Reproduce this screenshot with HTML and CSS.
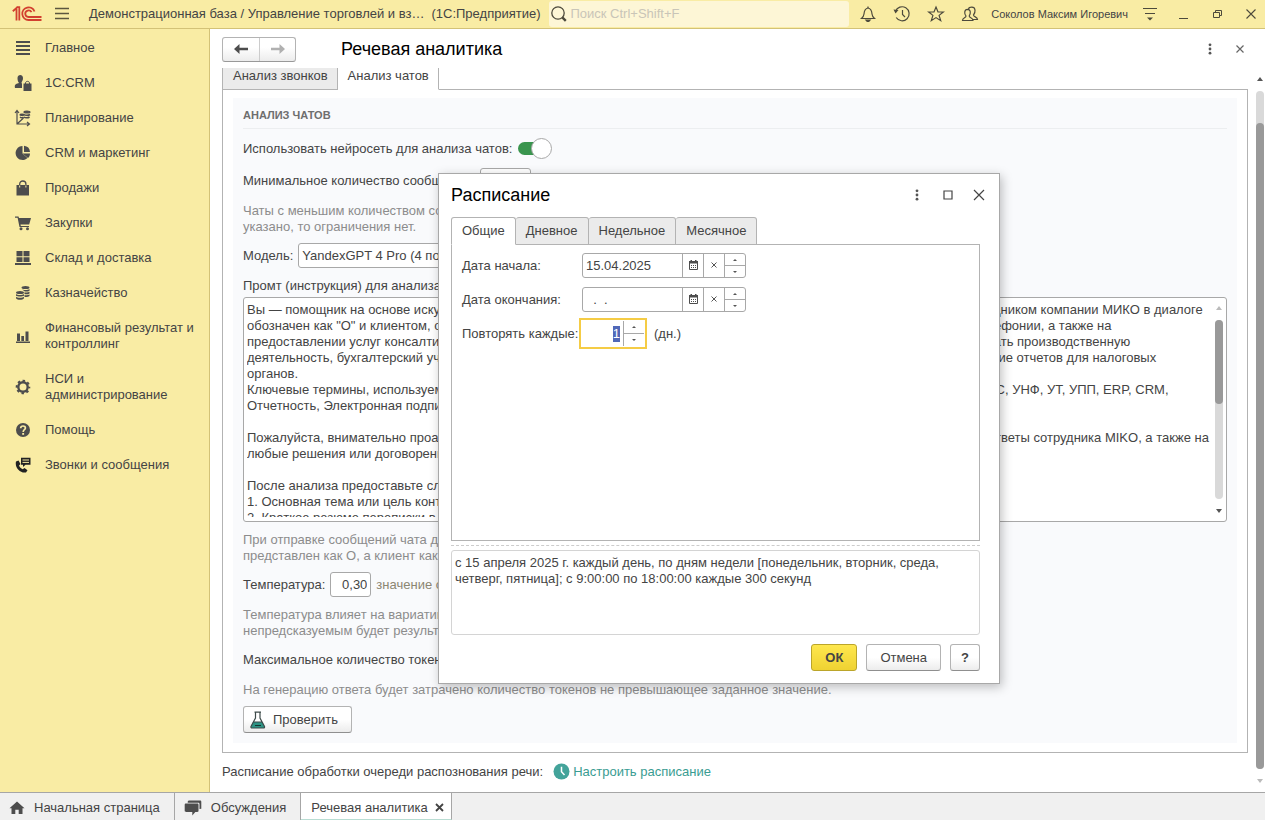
FILE: index.html
```html
<!DOCTYPE html>
<html lang="ru">
<head>
<meta charset="utf-8">
<meta name="viewport" content="width=device-width, initial-scale=1">
<title>Речевая аналитика</title>
<link rel="stylesheet" href="styles.css">
</head>
<body>
<div class="app">
  <header class="topbar">
    <svg class="logo" width="30" height="16" viewBox="0 0 30 16" fill="none" stroke="#d2402f" stroke-width="1.800"><path d="M.8 5.200L4.500 2V14.500M7.300 14.500V1.200H4.500"/><path d="M22.500 5.500A6.300 6.300 0 1 0 16.500 14H29.500M19.500 6.200A3.300 3.300 0 1 0 16.500 11H29.500"/></svg>
    <button class="icon-btn menu-btn" aria-label="Меню"><svg width="16" height="14" viewBox="0 0 16 14" stroke="#5c563f" stroke-width="1.300"><path d="M1 1.500h14M1 6.500h14M1 11.500h14"/></svg></button>
    <div class="app-title"><span>Демонстрационная база / Управление торговлей и вз…</span><span>(1С:Предприятие)</span></div>
    <label class="search">
      <svg width="18" height="18" viewBox="0 0 18 18" fill="none" stroke="#4d4a3c" stroke-width="1.300"><circle cx="8" cy="8" r="6.200"/><path d="M12.300 12.300l3.500 3.500" stroke-width="2.400"/></svg>
      <input type="text" placeholder="Поиск Ctrl+Shift+F" aria-label="Поиск">
    </label>
    <nav class="top-tools">
      <button class="icon-btn" aria-label="Оповещения"><svg width="18" height="18" viewBox="0 0 18 18" fill="none" stroke="#4d4a3c" stroke-width="1.200"><path d="M2.500 13.500h13c-1.800-1.600-2.300-2.500-2.500-4.500-.2-3-1-5.500-4-6-3 .5-3.800 3-4 6-.2 2-.7 2.900-2.500 4.500z"/><path d="M9 3V1.500"/><path d="M7 15.200h4L9.800 16.500H8.200z" fill="#4d4a3c"/></svg></button>
      <button class="icon-btn" aria-label="История"><svg width="18" height="18" viewBox="0 0 18 18" fill="none" stroke="#4d4a3c" stroke-width="1.200"><path d="M2.500 6.500A7 7 0 1 1 3.200 12.500M9.500 5v4.500l2.500 2.500"/><path d="M.5 4.500l5 .5-3 3.500z" fill="#4d4a3c" stroke="none"/></svg></button>
      <button class="icon-btn" aria-label="Избранное"><svg width="18" height="18" viewBox="0 0 18 18" fill="none" stroke="#4d4a3c" stroke-width="1.200"><path d="M9 2l2 5h5.300l-4.200 3.400 1.600 5.300L9 12.600l-4.700 3.100 1.600-5.300L1.700 7H7z"/></svg></button>
      <button class="icon-btn" aria-label="Пользователь"><svg width="18" height="18" viewBox="0 0 18 18" fill="none" stroke="#4d4a3c" stroke-width="1.200"><path d="M1.500 15.500c0-3 3.500-2.500 3.500-4.500C3 8.500 3.200 4.500 6.500 4.300c3.500.2 3.300 4.200 1.700 6.700 0 2 3.800 1.500 3.800 4.500z"/><path d="M7.500 4C8 2 13.500.8 14 5c.2 2-.5 3.800-1.500 5 0 2.200 4 1.500 4 4.500H12"/></svg></button>
      <span class="user-name">Соколов Максим Игоревич</span>
      <button class="icon-btn" aria-label="Настройки"><svg width="16" height="16" viewBox="0 0 16 16"><path d="M1 2.500h14M3 7.500h10" stroke="#4d4a3c" stroke-width="1.200"/><path d="M5 11.500h6l-3 3z" fill="#4d4a3c"/></svg></button>
      <button class="icon-btn win-btn" aria-label="Свернуть"><svg width="12" height="12" viewBox="0 0 12 12"><path d="M2 10.500h9" stroke="#4d4a3c"/></svg></button>
      <button class="icon-btn win-btn" aria-label="Восстановить"><svg width="12" height="12" viewBox="0 0 12 12" fill="none" stroke="#4d4a3c"><path d="M2.500 4.500h6v5h-6zM4.500 4.500v-2h6v5h-2"/></svg></button>
      <button class="icon-btn win-btn" aria-label="Закрыть"><svg width="12" height="12" viewBox="0 0 12 12" stroke="#4d4a3c" stroke-width="1.100"><path d="M1.500 1.500l9 9M10.500 1.500l-9 9"/></svg></button>
    </nav>
  </header>

  <nav class="sidebar">
    <a href="#"><svg width="16" height="16" viewBox="0 0 16 16" stroke="#4d4d4d" stroke-width="1.800"><path d="M1 2h14M1 6h14M1 10h14M1 14h14"/></svg><span>Главное</span></a>
    <a href="#"><svg width="18" height="18" viewBox="0 0 18 18" fill="#4d4d4d"><path d="M3.500 4C3.500 0 9 0 9 4c0 2-.8 3.500-1.500 4.200L8 10v4H1c-1-4 2-4.500 4-5C4 8 3.500 6 3.500 4z"/><path d="M8.800 8.500h1.600c.3-3 4.200-3 4.400 0H18V18H8.800z" fill="#f9eca4"/><path d="M9.500 9.500h8V17h-8z"/><path d="M11.500 10.500V9c.2-2.200 3.800-2.200 4 0v1.500" fill="none" stroke="#4d4d4d"/></svg><span>1C:CRM</span></a>
    <a href="#"><svg width="18" height="18" viewBox="0 0 18 18" fill="none" stroke="#4d4d4d" stroke-width="1.200"><path d="M3 2v13h12M1 4l2-2.500L5 4M13 13l2.500 2-2.500 2M3 15l6.500-6"/><ellipse cx="13" cy="3" rx="3" ry="1" fill="#4d4d4d"/><path d="M10 5.500c1 1 4.500 1 6 0M10 8c1 1 4 1 5.500 0M6 8c1 .8 2.500.8 3.500 0" stroke-width="1.600"/><ellipse cx="8" cy="5.800" rx="2" ry=".7" fill="#4d4d4d"/></svg><span>Планирование</span></a>
    <a href="#"><svg width="16" height="16" viewBox="0 0 16 16" fill="#4d4d4d"><path d="M7.500 1v7.500l5 4.500A7 7 0 1 1 7.500 1z"/><path d="M9 .8A6.800 6.800 0 0 1 15 7H9zM7.500 8.500H15c0 2-.9 3.500-2 4.500z"/></svg><span>CRM и маркетинг</span></a>
    <a href="#"><svg width="16" height="16" viewBox="0 0 16 16"><path d="M1.500 5h12.500V15.500H1.500z" fill="#4d4d4d"/><path d="M4.700 8V4c0-4 6.200-4 6.200 0v4" fill="none" stroke="#4d4d4d" stroke-width="1.300"/><path d="M4.700 5.500v2M10.900 5.500v2" stroke="#f9eca4"/></svg><span>Продажи</span></a>
    <a href="#"><svg width="16" height="16" viewBox="0 0 16 16" fill="#4d4d4d"><path d="M0 1.500h3.500L4 3h12l-1.800 6.500H5.500l.3 1.500H14v1H4.500L2.600 2.800H0z"/><circle cx="6" cy="13.800" r="1.500"/><circle cx="12.500" cy="13.800" r="1.500"/></svg><span>Закупки</span></a>
    <a href="#"><svg width="16" height="16" viewBox="0 0 16 16" fill="#4d4d4d"><path d="M1.500 1h6v5.300h-6zM8.500 1h6v5.300h-6zM1.500 7.200h6V12h-6zM8.500 7.200h6V12h-6zM0 13h16v2H0z"/></svg><span>Склад и доставка</span></a>
    <a href="#"><svg width="16" height="16" viewBox="0 0 16 16" fill="#4d4d4d"><ellipse cx="10.500" cy="2.500" rx="4" ry="1.600"/><path d="M6.500 4c1.500 1.300 6.500 1.300 8 0v1.700c-1.500 1-3.500 1-5 .6zM9.500 7.300c2 .4 4 .2 5-.6v1.700c-1.500 1-3.500 1-5 .6zM9.500 10c2 .4 4 .2 5-.6v1.700c-1.500 1-3.500 1-5 .6z"/><ellipse cx="5" cy="7.500" rx="4" ry="1.600"/><path d="M1 9c1.500 1.300 6.500 1.300 8 0v1.700c-1.500 1-6.500 1-8 0zM1 11.700c1.500 1.300 6.500 1.300 8 0v1.500c-1.500 2-6.500 2-8 0z"/></svg><span>Казначейство</span></a>
    <a href="#"><svg width="16" height="16" viewBox="0 0 16 16" fill="#4d4d4d"><path d="M1 13.500h14V15H1zM2 5.500h3V13H2zM6.300 8h2.700v5H6.300zM10.500 3.500h3V13h-3z"/></svg><span>Финансовый результат и контроллинг</span></a>
    <a href="#"><svg width="16" height="16" viewBox="0 0 16 16" fill="none" stroke="#4d4d4d"><circle cx="8" cy="8" r="4.700" stroke-width="2.400"/><circle cx="8" cy="8" r="6.300" stroke-width="2" stroke-dasharray="2.475 2.473" stroke-dashoffset="1.200"/></svg><span>НСИ и администрирование</span></a>
    <a href="#"><svg width="16" height="16" viewBox="0 0 16 16"><circle cx="8" cy="8" r="7" fill="#4d4d4d"/><path d="M5.700 6.200c0-3 4.800-2.800 4.700-.2C10.300 7.800 8.200 7.700 8.200 10" fill="none" stroke="#f9eca4" stroke-width="1.700"/><path d="M7.200 11h1.900v1.800H7.200z" fill="#f9eca4"/></svg><span>Помощь</span></a>
    <a href="#"><svg width="16" height="16" viewBox="0 0 16 16"><path d="M1 4.500l2.500-1L5.500 7 4 8.500c.7 1.800 2 3 3.700 3.700L9.500 11l3 2.200-1.500 2.300C5 16.500-.5 10.500 1 4.500z" fill="#222"/><path d="M6 .8h9.500v7h-5L8 10V7.800H6z" fill="#222"/><path d="M7.500 3h6.500M7.500 5.400h6.500" stroke="#f9eca4"/></svg><span>Звонки и сообщения</span></a>
  </nav>

  <main class="main">
    <div class="page-head">
      <div class="history">
        <button aria-label="Назад"><svg width="14" height="12" viewBox="0 0 14 12"><path d="M0 6l5.500-5v3.800H14v2.400H5.500V11z" fill="#4d4d4d"/></svg></button>
        <button aria-label="Вперёд" disabled><svg width="14" height="12" viewBox="0 0 14 12"><path d="M14 6L8.500 1v3.800H0v2.400h8.500V11z" fill="#b0b0b0"/></svg></button>
      </div>
      <h1>Речевая аналитика</h1>
      <button class="icon-btn" aria-label="Ещё"><svg width="12" height="12" viewBox="0 0 12 12" fill="#555"><circle cx="6" cy="1.800" r="1.400"/><circle cx="6" cy="6" r="1.400"/><circle cx="6" cy="10.200" r="1.400"/></svg></button>
      <button class="icon-btn" aria-label="Закрыть форму"><svg width="12" height="12" viewBox="0 0 12 12" stroke="#666" stroke-width="1.200"><path d="M2.500 2.500l7 7M9.500 2.500l-7 7"/></svg></button>
    </div>
    <div class="page-body">
      <div class="form">
        <div class="tabs form-tabs" role="tablist">
          <button role="tab">Анализ звонков</button>
          <button role="tab" aria-selected="true">Анализ чатов</button>
        </div>
        <div class="tab-page">
          <section class="group">
            <h2>АНАЛИЗ ЧАТОВ</h2>
            <div class="row toggle-row"><label for="use-ai">Использовать нейросеть для анализа чатов:</label><input id="use-ai" class="switch" type="checkbox" role="switch" checked></div>
            <div class="row"><label for="min-count">Минимальное количество сообщений:</label><input id="min-count" class="field short" type="text"></div>
            <p class="hint">Чаты с меньшим количеством сообщений не будут анализироваться. Если не<br>указано, то ограничения нет.</p>
            <div class="row"><label for="model">Модель:</label><input id="model" class="field model" type="text" value="YandexGPT 4 Pro (4 поколение)"></div>
            <label class="block-label" for="prompt">Промт (инструкция) для анализа чатов:</label>
            <div class="memo">
              <textarea id="prompt" spellcheck="false">Вы — помощник на основе искусственного интеллекта, анализирующий деловые диалоги чатов между менеджером, сотрудником компании МИКО в диалоге
обозначен как "О" и клиентом, обозначен как "К". Компания занимается разработкой программ и их решений в области телефонии, а также на
предоставлении услуг консалтинга и внедрения программ на платформе 1С, которые позволяют регулярно автоматизировать производственную
деятельность, бухгалтерский учет, управление персоналом, складской и торговый учет, точный расчет зарплаты, составление отчетов для налоговых
органов.
Ключевые термины, используемые в диалогах: Панель телефонии, Софтфон, Звонок, Маршрутизация, Облако, БП, ЗУП, 1С, УНФ, УТ, УПП, ERP, CRM,
Отчетность, Электронная подпись.

Пожалуйста, внимательно проанализируйте переписку, обращая внимание на вопросы клиента, уточнения и полученные ответы сотрудника MIKO, а также на
любые решения или договоренности.

После анализа предоставьте следующее:
1. Основная тема или цель контакта.
2. Краткое резюме переписки в нескольких словах.</textarea>
              <div class="scroll memo-scroll" aria-hidden="true"><i class="up dim"></i><div class="track"><b></b></div><i class="down"></i></div>
            </div>
            <p class="hint">При отправке сообщений чата для анализа сотрудник<br>представлен как О, а клиент как К.</p>
            <div class="row"><label for="temp">Температура:</label><input id="temp" class="field num" type="text" value="0,30"><span class="note">значение от 0 до 1</span></div>
            <p class="hint">Температура влияет на вариативность ответов, чем выше, тем более<br>непредсказуемым будет результат.</p>
            <div class="row"><label for="tokens">Максимальное количество токенов:</label><input id="tokens" class="field short" type="text"></div>
            <p class="hint">На генерацию ответа будет затрачено количество токенов не превышающее заданное значение.</p>
            <button class="btn check-btn"><svg width="16" height="18" viewBox="0 0 16 18"><path d="M3 11h9.500l2 4.500c.3 1-.2 1.500-1 1.500H2c-.8 0-1.300-.5-1-1.500z" fill="#2d9384"/><path d="M5.500 1v6L1 15.500c-.3 1 .2 1.500 1 1.500h11.500c.8 0 1.300-.5 1-1.500L10 7V1M4.500 1.200h6.500M3 11h9.500" fill="none" stroke="#3e4b4a" stroke-width="1.200"/><path d="M5 14.500h6" stroke="#16352f"/></svg>Проверить</button>
          </section>
        </div>
        <div class="schedule"><span>Расписание обработки очереди распознования речи:</span>
          <a href="#"><svg width="17" height="17" viewBox="0 0 17 17"><circle cx="8.500" cy="8.500" r="8" fill="#43a39a"/><path d="M8.500 3.800v5l3 3.200" fill="none" stroke="#fff" stroke-width="1.500"/></svg>Настроить расписание</a>
        </div>
      </div>
      <div class="scroll page-scroll" aria-hidden="true"><i class="up"></i><div class="track"><b></b></div><i class="down dim"></i></div>
    </div>
  </main>

  <footer class="taskbar">
    <a href="#"><svg width="16" height="14" viewBox="0 0 16 14" fill="#4d4d4d"><path d="M8 .5l7.500 6.800h-2V13H9.700V8.800H6.300V13H2.500V7.300h-2z"/></svg>Начальная страница</a>
    <a href="#"><svg width="18" height="16" viewBox="0 0 18 16" fill="#4d4d4d"><path d="M5 .5h11c.8 0 1.300.4 1.300 1.300v7L15.500 9V4c0-.8-.5-1.300-1.300-1.300H3.700C3.700 1.300 4 .5 5 .5z"/><path d="M2 3.500h11.300c.7 0 1.200.5 1.200 1.200v6c0 .8-.5 1.200-1.200 1.200h-2l-3 3.600v-3.600H2c-.8 0-1.300-.4-1.300-1.200v-6c0-.7.5-1.200 1.300-1.200z"/></svg>Обсуждения</a>
    <a href="#" class="current">Речевая аналитика<svg width="9" height="9" viewBox="0 0 9 9" stroke="#444" stroke-width="1.800"><path d="M1 1l7 7M8 1L1 8"/></svg></a>
  </footer>

  <section class="dialog" role="dialog" aria-labelledby="dlg-title">
    <div class="dialog-head">
      <h2 id="dlg-title">Расписание</h2>
      <button class="icon-btn" aria-label="Ещё"><svg width="12" height="12" viewBox="0 0 12 12" fill="#555"><circle cx="6" cy="1.800" r="1.400"/><circle cx="6" cy="6" r="1.400"/><circle cx="6" cy="10.200" r="1.400"/></svg></button>
      <button class="icon-btn" aria-label="Развернуть"><svg width="12" height="12" viewBox="0 0 12 12" fill="none" stroke="#444" stroke-width="1.200"><path d="M2 2h8v8H2z"/></svg></button>
      <button class="icon-btn" aria-label="Закрыть окно"><svg width="12" height="12" viewBox="0 0 12 12" stroke="#444" stroke-width="1.200"><path d="M1 1l10 10M11 1L1 11"/></svg></button>
    </div>
    <div class="tabs dialog-tabs" role="tablist">
      <button role="tab" aria-selected="true">Общие</button>
      <button role="tab">Дневное</button>
      <button role="tab">Недельное</button>
      <button role="tab">Месячное</button>
    </div>
    <div class="dialog-page">
      <label for="d-start">Дата начала:</label>
      <div class="combo"><input id="d-start" type="text" value="15.04.2025">
        <button aria-label="Календарь"><svg width="11" height="12" viewBox="0 0 11 12"><path d="M1.500 2.500h8v7h-8z" fill="none" stroke="#4d4d4d"/><path d="M1 1h9v2.500H1zM2.500 0H4v1H2.500zM7 0h1.500v1H7z" fill="#4d4d4d"/><path d="M3 5.500h5M3 7.500h5" stroke="#4d4d4d" stroke-dasharray="1 1"/></svg></button>
        <button aria-label="Очистить"><svg width="7" height="7" viewBox="0 0 7 7" stroke="#555"><path d="M.5.5l5 5M5.500.5l-5 5"/></svg></button>
        <div class="spin"><button aria-label="Больше"><i class="up"></i></button><button aria-label="Меньше"><i class="down"></i></button></div></div>
      <label for="d-end">Дата окончания:</label>
      <div class="combo"><input id="d-end" type="text" value="  .  .">
        <button aria-label="Календарь"><svg width="11" height="12" viewBox="0 0 11 12"><path d="M1.500 2.500h8v7h-8z" fill="none" stroke="#4d4d4d"/><path d="M1 1h9v2.500H1zM2.500 0H4v1H2.500zM7 0h1.500v1H7z" fill="#4d4d4d"/><path d="M3 5.500h5M3 7.500h5" stroke="#4d4d4d" stroke-dasharray="1 1"/></svg></button>
        <button aria-label="Очистить"><svg width="7" height="7" viewBox="0 0 7 7" stroke="#555"><path d="M.5.5l5 5M5.500.5l-5 5"/></svg></button>
        <div class="spin"><button aria-label="Больше"><i class="up"></i></button><button aria-label="Меньше"><i class="down"></i></button></div></div>
      <label for="repeat">Повторять каждые:</label>
      <div class="with-unit"><div class="combo active"><input id="repeat" type="text" value="1">
        <div class="spin"><button aria-label="Больше"><i class="up"></i></button><button aria-label="Меньше"><i class="down"></i></button></div></div><span>(дн.)</span></div>
    </div>
    <hr>
    <textarea class="summary" readonly aria-label="Описание расписания">с 15 апреля 2025 г. каждый день, по дням недели [понедельник, вторник, среда, четверг, пятница]; с 9:00:00 по 18:00:00 каждые 300 секунд</textarea>
    <div class="dialog-foot">
      <button class="btn primary">ОК</button>
      <button class="btn">Отмена</button>
      <button class="btn help">?</button>
    </div>
  </section>
</div>
<script src="app.js"></script>
</body>
</html>
```
FILE: styles.css
```css
* { box-sizing: border-box; }
body {
  margin: 0;
  font: 13px/16px "Liberation Sans", Arial, sans-serif;
  color: #444;
  background: #fff;
}
button, input, textarea { font: inherit; color: inherit; margin: 0; }
button { padding: 0; border: 0; background: none; }
h1, h2, p { margin: 0; }
svg { flex: none; display: block; }

.app {
  position: relative;
  display: grid;
  grid-template: 29px minmax(0, 1fr) 28px / 210px minmax(0, 1fr);
  height: 100vh;
  overflow: hidden;
}
.icon-btn { display: flex; align-items: center; justify-content: center; }

/* Top bar */
.topbar {
  grid-column: 1 / -1;
  display: flex;
  align-items: center;
  padding: 0 5px 0 12px;
  background: #f9eca4;
  border-bottom: 1px solid #d3c277;
}
.menu-btn { width: 16px; margin-left: 12px; }
.app-title { display: flex; gap: 7px; margin-left: 19px; white-space: nowrap; }
.search {
  flex: 1;
  display: flex;
  align-items: center;
  gap: 2px;
  height: 26px;
  margin-left: 9px;
  padding-left: 1px;
  border-radius: 3px;
  background: #fdf6d6;
}
.search input { flex: 1; min-width: 0; padding: 0; border: 0; outline: 0; background: none; }
.search input::placeholder { color: #c9c5b8; opacity: 1; }
.top-tools { display: flex; align-items: center; margin-left: 10px; gap: 16px; }
.user-name { font-size: 11px; margin: 0 -2px 0 -4px; }
.top-tools .win-btn { width: 18px; }

/* Sidebar */
.sidebar {
  display: flex;
  flex-direction: column;
  gap: 3px;
  padding: 3px 12px 0 14px;
  background: #f9eca4;
  border-right: 1px solid #d3c277;
}
.sidebar a {
  display: grid;
  grid-template-columns: 18px 1fr;
  align-items: center;
  justify-items: center;
  gap: 13px;
  padding: 8px 0;
  color: inherit;
  text-decoration: none;
}
.sidebar a span { justify-self: start; }
.sidebar a svg { margin-block: -2px; }

/* Page */
.main { display: flex; flex-direction: column; min-width: 0; min-height: 0; padding-left: 12px; }
.page-head { display: flex; align-items: center; gap: 18px; height: 38px; padding: 2px 19px 0 0; flex: none; }
.page-head h1 { flex: 1; margin-left: 27px; font: 18px/22px "Liberation Sans", Arial, sans-serif; color: #000; }
.history {
  display: flex;
  height: 25px;
  border: 1px solid #b3b3b3;
  border-bottom-color: #999;
  border-radius: 3px;
  background: linear-gradient(#fff 40%, #ececec);
}
.history button { width: 36px; display: grid; place-items: center; }
.history button + button { border-left: 1px solid #ccc; }
.page-body { flex: 1; display: flex; min-height: 0; overflow: hidden; }
.form { flex: 1; min-width: 0; }

.tabs { display: flex; }
.tabs button { border: 1px solid #b3b3b3; background: #ebebeb; padding: 0 10px; }
.tabs button + button { border-left: 0; }
.tabs button[aria-selected] { background: #fff; border-bottom-color: #fff; }
.form-tabs { position: relative; margin-top: 1px; }
.form-tabs button { height: 22px; border-top: 0; padding: 0 9px 5px 10px; }
.tab-page { margin-top: -1px; padding: 8px 10px 9px; border: 1px solid #b3b3b3; }
.group { display: flex; flex-direction: column; padding: 9px 10px 10px; background: #f9fafc; }
.group h2 {
  font: bold 11px/16px "Liberation Sans", Arial, sans-serif;
  color: #6e6e6e;
  padding-bottom: 5px;
  border-bottom: 1px solid #eceef0;
}
.row { display: flex; align-items: center; gap: 5px; height: 25px; }
.toggle-row { gap: 6px; margin: 7px 0; }
.hint { margin: 10px 0 8px; color: #8c8c8c; }
.note { color: #8c8672; }
.field { height: 25px; border: 1px solid #a8a8a8; border-radius: 3px; background: #fff; padding: 0 3px; }
.short { width: 51px; }
.model { width: 240px; }
.num { width: 41px; text-align: right; }
.block-label { margin: 10px 0 3px; }
.switch {
  appearance: none;
  display: flex;
  align-items: center;
  justify-content: flex-end;
  width: 26px;
  height: 13px;
  background: #3a954e;
  border-radius: 7px;
}
.switch::before {
  content: "";
  flex: none;
  width: 19px;
  height: 19px;
  margin-right: -8px;
  border: 1px solid #a8a8a8;
  border-radius: 50%;
  background: #fff;
}
.memo { display: flex; height: 225px; border: 1px solid #a8a8a8; border-radius: 3px; background: #fff; padding: 4px 3px; }
.memo textarea { flex: 1; min-width: 0; border: 0; outline: 0; padding: 0; resize: none; overflow: hidden; white-space: pre; background: none; }

.btn {
  height: 27px;
  padding: 0 13px;
  border: 1px solid #b3b3b3;
  border-bottom-color: #8f8f8f;
  border-radius: 3px;
  background: linear-gradient(#fff 50%, #ececec);
}
.check-btn { display: flex; align-items: center; align-self: flex-start; gap: 7px; padding-left: 6px; }
.schedule { display: flex; align-items: center; gap: 10px; margin-top: 10px; }
.schedule a { display: flex; align-items: center; gap: 3px; color: #3a9c92; text-decoration: none; }

/* Scroll bars */
.scroll { display: flex; flex-direction: column; align-items: center; }
.up, .down { flex: none; width: 0; height: 0; border: 3px solid transparent; }
.up { border-top: 0; border-bottom: 4px solid #555; }
.down { border-bottom: 0; border-top: 4px solid #555; }
.up.dim { border-bottom-color: #bbb; }
.down.dim { border-top-color: #bbb; }
.track { flex: 1; width: 8px; border-radius: 4px; background: #d9d9d9; }
.track b { display: block; border-radius: 4px; background: #999; }
.memo-scroll { padding: 4px 0 4px; gap: 10px; }
.memo-scroll .track b { height: 47%; }
.page-scroll { width: 17px; padding: 10px 1px 9px 7px; gap: 10px; }
.page-scroll .track { display: flex; padding-top: 32px; }
.page-scroll .track b { flex: 1; }

/* Open windows bar */
.taskbar { grid-column: 1 / -1; display: flex; background: #f0f0f0; border-top: 1px solid #a6a6a6; }
.taskbar a {
  display: flex;
  align-items: center;
  gap: 9px;
  padding: 3px 14px 0 9px;
  border-right: 1px solid #a6a6a6;
  color: inherit;
  text-decoration: none;
}
.taskbar .current { gap: 7px; padding: 3px 7px 0 10px; background: #fff; border-bottom: 1px solid #b9ddd3; }

/* Schedule dialog */
.dialog {
  position: absolute;
  left: 438px;
  top: 173px;
  width: 562px;
  padding: 8px 19px 12px 12px;
  border: 1px solid #a8a8a8;
  background: #fff;
  box-shadow: 2px 3px 10px rgba(0, 0, 0, .25);
}
.dialog-head { display: flex; align-items: center; gap: 19px; height: 26px; margin-right: -5px; }
.dialog-head h2 { flex: 1; font: 18px/22px "Liberation Sans", Arial, sans-serif; color: #000; }
.dialog-tabs { position: relative; margin-top: 9px; }
.dialog-tabs button { height: 28px; border-radius: 3px 3px 0 0; }
.dialog-page {
  display: grid;
  grid-template-columns: 120px 1fr;
  grid-auto-rows: 25px;
  align-items: center;
  align-content: start;
  row-gap: 9px;
  height: 297px;
  margin-top: -1px;
  padding: 8px 10px;
  border: 1px solid #b3b3b3;
}
.combo {
  display: flex;
  width: 164px;
  height: 25px;
  border: 1px solid #a8a8a8;
  border-radius: 3px;
  background: #fff;
}
.combo input { flex: 1; min-width: 0; padding: 0 3px; border: 0; outline: 0; background: none; white-space: pre; }
.combo > button { width: 21px; display: grid; place-items: center; border-left: 1px solid #a8a8a8; }
.spin { display: flex; flex-direction: column; width: 21px; border-left: 1px solid #a8a8a8; }
.spin button { flex: 1; display: grid; place-items: center; }
.spin button + button { border-top: 1px solid #a8a8a8; }
.spin i { border-width: 2px; }
.spin .up { border-top: 0; }
.spin .down { border-bottom: 0; }
.combo.active { width: 62px; border: 0; border-radius: 0; outline: 2px solid #f5cc45; outline-offset: 1px; }
.combo.active input { text-align: right; }
.combo input::selection { color: #fff; background: #5068b8; }
.with-unit { display: flex; align-items: center; gap: 10px; }
.dialog hr { margin: 4px 0; border: 0; border-top: 1px dashed #ccc; }
.summary {
  display: block;
  width: 100%;
  height: 85px;
  padding: 4px 3px;
  border: 1px solid #d4d4d4;
  border-radius: 3px;
  resize: none;
  outline: 0;
}
.dialog-foot { display: flex; justify-content: flex-end; gap: 9px; margin-top: 9px; }
.primary { font-weight: bold; border-color: #bba52a; background: linear-gradient(#fee74e, #efd232); }
.help { padding: 0 10px; font-weight: bold; }
```
FILE: app.js
```js
const repeat = document.getElementById("repeat");
repeat.focus();
repeat.select();
```
